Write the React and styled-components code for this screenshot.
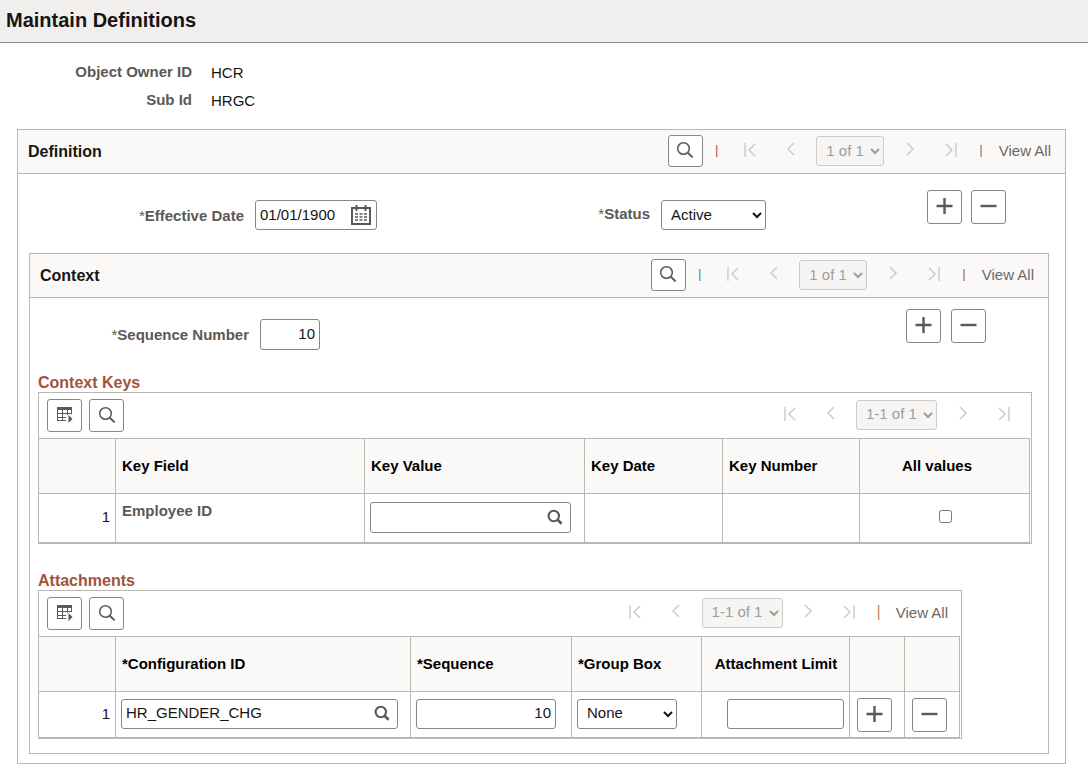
import { useState } from "react";
import styled, { createGlobalStyle } from "styled-components";

const GlobalStyle = createGlobalStyle`
  * {
    box-sizing: border-box;
  }

  body {
    margin: 0;
    background: #fff;
    color: #161513;
    font-family: "Liberation Sans", Arial, Helvetica, sans-serif;
    font-size: 15px;
    line-height: 20px;
  }

  button, input, select {
    margin: 0;
    color: inherit;
    font: inherit;
  }
`;

const PageHeader = styled.header`
  padding: 8px 6px 10px;
  background: #f1efed;
  border-bottom: 1px solid #8b8580;
`;

const PageTitle = styled.h1`
  margin: 0;
  font-size: 20px;
  line-height: 24px;
`;

const Summary = styled.dl`
  display: grid;
  grid-template-columns: 192px 1fr;
  column-gap: 19px;
  row-gap: 8px;
  margin: 0;
  padding: 19px 0;
`;

const SummaryTerm = styled.dt`
  color: #5b5856;
  font-weight: bold;
  text-align: right;
`;

const SummaryValue = styled.dd`
  margin: 0;
  padding-top: 1px;
  line-height: 19px;
`;

const Panel = styled.section`
  margin: ${({ $nested }) => ($nested ? "0 16px 9px 11px" : "0 22px 10px 17px")};
  border: 1px solid #bcb6b1;
`;

const PanelHeader = styled.header`
  display: flex;
  align-items: center;
  justify-content: space-between;
  padding: 5px 14px 6px 10px;
  background: #fbf9f8;
  border-bottom: 1px solid #bcb6b1;
`;

const PanelTitle = styled.h2`
  margin: 0;
  padding-top: 2px;
  font-size: 16px;
`;

const Toolbar = styled.div`
  display: flex;
  align-items: center;
`;

const IconButton = styled.button`
  display: inline-flex;
  flex: none;
  align-items: center;
  justify-content: center;
  width: 35px;
  height: ${({ $height }) => $height || 34}px;
  padding: 0 0 2px;
  background: #fff;
  border: 1px solid #8b8580;
  border-radius: 3px;
  color: #5b5856;
`;

const NavButton = styled.button`
  display: flex;
  justify-content: center;
  width: 41px;
  padding: 0 0 2px;
  background: none;
  border: 0;
  color: #cfcbc7;
`;

const Divider = styled.span`
  margin: 0 ${({ $after }) => $after}px 2px ${({ $before }) => $before}px;
  color: ${({ $color }) => $color};
  font-size: ${({ $size }) => $size || 13}px;
`;

const ViewAll = styled.a`
  color: #6b6866;
  text-decoration: none;
  white-space: nowrap;
`;

const Select = styled.select`
  width: ${({ $width }) => $width}px;
  height: 30px;
  padding: 0 0 2px 5px;
  background: #fff;
  border: 1px solid #8b8580;
  border-radius: 3px;
  color: #161513;

  &:disabled {
    margin: 0 5px;
    background: #f6f5f3;
    border-color: #cfcbc6;
    color: #a09d9a;
    opacity: 1;
  }
`;

const FieldRow = styled.div`
  display: flex;
  align-items: flex-start;
  padding: ${({ $nested }) => ($nested ? "11px 62px 22px 0" : "16px 59px 23px 0")};
`;

const FieldLabel = styled.label`
  width: ${({ $width }) => $width}px;
  margin-right: 11px;
  padding-top: ${({ $top }) => $top || 16}px;
  color: #5b5856;
  font-weight: bold;
  text-align: right;
`;

const Required = styled.span`
  font-weight: normal;
`;

const Control = styled.div`
  padding-top: 10px;
`;

const TextInput = styled.input`
  display: block;
  width: ${({ $width }) => $width}px;
  height: ${({ $height }) => $height || 30}px;
  margin-left: ${({ $end }) => ($end ? "auto" : 0)};
  padding: 0 4px 2px;
  background: #fff;
  border: 1px solid #8b8580;
  border-radius: 3px;
  text-align: ${({ $numeric }) => ($numeric ? "right" : "left")};
`;

const InputGroup = styled.div`
  display: flex;
  align-items: center;
  width: ${({ $width }) => $width}px;
  height: ${({ $height }) => $height || 30}px;
  padding: 0 5px 0 4px;
  background: #fff;
  border: 1px solid #8b8580;
  border-radius: 3px;
`;

const GroupInput = styled.input`
  flex: 1;
  min-width: 0;
  height: 100%;
  padding: 0 0 2px;
  background: none;
  border: 0;
  outline: none;
`;

const GroupButton = styled.button`
  display: flex;
  padding: 0 ${({ $inset }) => $inset || 0}px 1px 0;
  background: none;
  border: 0;
  color: #5b5856;
`;

const Actions = styled.div`
  display: flex;
  gap: ${({ $gap }) => $gap}px;
  margin-left: auto;
`;

const GridTitle = styled.h3`
  margin: 0;
  padding: 1px 0 0 8px;
  color: #a2533a;
  font-size: 16px;
  line-height: 19px;
`;

const Grid = styled.div`
  width: ${({ $fit }) => ($fit ? "fit-content" : "auto")};
  margin: 0 16px ${({ $fit }) => ($fit ? 14 : 26)}px 8px;
  padding-right: 1px;
  border: 1px solid #bcb6b1;
`;

const GridToolbar = styled.div`
  display: flex;
  align-items: center;
  justify-content: space-between;
  padding: 6px ${({ $end }) => $end}px 6px 8px;

  ${Toolbar} {
    padding-bottom: 2px;
  }
`;

const GridTools = styled.div`
  display: flex;
  gap: 7px;
`;

const Table = styled.table`
  width: 100%;
  border-top: 1px solid #bcb6b1;
  border-spacing: 0;
  table-layout: ${({ $fit }) => ($fit ? "auto" : "fixed")};
`;

const Th = styled.th`
  width: ${({ $width }) => $width}px;
  height: 55px;
  padding: 0 ${({ $end }) => $end || 5}px 0 6px;
  background: #fbf9f8;
  border-right: 1px solid #bcb6b1;
  border-bottom: 1px solid #bcb6b1;
  color: #000;
  text-align: ${({ $center }) => ($center ? "center" : "left")};
  white-space: nowrap;
`;

const Td = styled.td`
  height: ${({ $height }) => $height}px;
  padding: 0 5px 2px;
  border-right: 1px solid #bcb6b1;
  border-bottom: 1px solid #bcb6b1;
  text-align: ${({ $align }) => $align || "left"};

  ${IconButton} {
    display: flex;
    margin: 2px 0 0 2px;
  }
`;

const KeyField = styled.div`
  padding: 0 1px 12px;
  color: #5b5856;
  font-weight: bold;
`;

const CheckboxCell = styled.div`
  display: flex;
  justify-content: center;
  padding: 0 0 2px 2px;
`;

const Checkbox = styled.input`
  width: 13px;
  height: 13px;
`;

function SearchIcon() {
  return (
    <svg width="18" height="18" viewBox="0 0 18 18" fill="none" stroke="currentColor">
      <circle cx="7.5" cy="7.5" r="5.8" strokeWidth="1.5" />
      <path d="M11.8 11.8L16.6 16.4" strokeWidth="2" />
    </svg>
  );
}

function LookupIcon() {
  return (
    <svg width="16" height="16" viewBox="0 0 16 16" fill="none" stroke="currentColor">
      <circle cx="6.8" cy="7" r="5.2" strokeWidth="2.1" />
      <path d="M10.3 10.5L14.6 14.7" strokeWidth="2.6" />
    </svg>
  );
}

function CalendarIcon() {
  return (
    <svg width="20" height="20" viewBox="0 0 20 20" fill="none" stroke="currentColor">
      <path d="M1 3H19V19H1Z" strokeWidth="2" />
      <path d="M5.5 0V6M14.5 0V6" strokeWidth="2" />
      <path d="M4 9H16M4 12H16M4 15H16" strokeWidth="1.5" strokeDasharray="3 1.5" />
    </svg>
  );
}

function GridIcon() {
  return (
    <svg width="18" height="18" viewBox="0 0 18 18" fill="none" stroke="currentColor">
      <path d="M1 1H16V4H1Z" fill="currentColor" stroke="none" />
      <path d="M1.5 3V15M6.5 3V15M11.5 3V9M15.5 3V8M1 7.5H16M1 11.5H10M1 14.5H10" />
      <path d="M12.5 9L16.5 13L12.5 17Z" fill="currentColor" stroke="none" />
    </svg>
  );
}

function PlusIcon() {
  return (
    <svg width="17" height="16" viewBox="0 0 17 16" fill="none" stroke="currentColor" strokeWidth="2.4">
      <path d="M0.5 8H16.5M8.5 0V16" />
    </svg>
  );
}

function MinusIcon() {
  return (
    <svg width="17" height="16" viewBox="0 0 17 16" fill="none" stroke="currentColor" strokeWidth="2.4">
      <path d="M0.5 8H16.5" />
    </svg>
  );
}

const navPaths = {
  first: "M2 1V15M12 2L6 8L12 14",
  prev: "M10 1L4 7L10 13",
  next: "M4 1L10 7L4 13",
  last: "M2 2L8 8L2 14M12 1V15",
};

function NavIcon({ type }) {
  return (
    <svg width="14" height="16" viewBox="0 0 14 16" fill="none" stroke="currentColor" strokeWidth="1.5">
      <path d={navPaths[type]} />
    </svg>
  );
}

function Pager({ range, width, name }) {
  return (
    <>
      <NavButton type="button" disabled aria-label={`First ${name}`}>
        <NavIcon type="first" />
      </NavButton>
      <NavButton type="button" disabled aria-label={`Previous ${name}`}>
        <NavIcon type="prev" />
      </NavButton>
      <Select $width={width} disabled aria-label={`${name} range`}>
        <option>{range}</option>
      </Select>
      <NavButton type="button" disabled aria-label={`Next ${name}`}>
        <NavIcon type="next" />
      </NavButton>
      <NavButton type="button" disabled aria-label={`Last ${name}`}>
        <NavIcon type="last" />
      </NavButton>
    </>
  );
}

function PanelBar({ title, colors }) {
  return (
    <PanelHeader>
      <PanelTitle>{title}</PanelTitle>
      <Toolbar>
        <IconButton type="button" $height={32} aria-label={`Find ${title}`}>
          <SearchIcon />
        </IconButton>
        <Divider $before={12} $after={11} $color={colors[0]}>|</Divider>
        <Pager range="1 of 1" width={68} name={title} />
        <Divider $before={8} $after={16} $color={colors[1]}>|</Divider>
        <ViewAll href="#">View All</ViewAll>
      </Toolbar>
    </PanelHeader>
  );
}

function GridButtons({ name }) {
  return (
    <GridTools>
      <IconButton type="button" $height={33} aria-label={`${name} grid actions`}>
        <GridIcon />
      </IconButton>
      <IconButton type="button" $height={33} aria-label={`Find ${name}`}>
        <SearchIcon />
      </IconButton>
    </GridTools>
  );
}

function ContextKeys() {
  const [value, setValue] = useState("");

  return (
    <>
      <GridTitle>Context Keys</GridTitle>
      <Grid>
        <GridToolbar $end={6}>
          <GridButtons name="Context Keys" />
          <Toolbar>
            <Pager range="1-1 of 1" width={81} name="Context Keys" />
          </Toolbar>
        </GridToolbar>
        <Table>
          <thead>
            <tr>
              <Th $width={77} />
              <Th $width={249}>Key Field</Th>
              <Th $width={220}>Key Value</Th>
              <Th $width={138}>Key Date</Th>
              <Th $width={137}>Key Number</Th>
              <Th $width={170} $center $end={21}>All values</Th>
            </tr>
          </thead>
          <tbody>
            <tr>
              <Td $height={49} $align="right">1</Td>
              <Td><KeyField>Employee ID</KeyField></Td>
              <Td>
                <InputGroup $width={201} $height={31}>
                  <GroupInput
                    aria-label="Key Value"
                    value={value}
                    onChange={(e) => setValue(e.target.value)}
                  />
                  <GroupButton type="button" $inset={2} aria-label="Look up Key Value">
                    <LookupIcon />
                  </GroupButton>
                </InputGroup>
              </Td>
              <Td />
              <Td />
              <Td>
                <CheckboxCell>
                  <Checkbox type="checkbox" aria-label="All values" />
                </CheckboxCell>
              </Td>
            </tr>
          </tbody>
        </Table>
      </Grid>
    </>
  );
}

function Attachments() {
  return (
    <>
      <GridTitle>Attachments</GridTitle>
      <Grid $fit>
        <GridToolbar $end={12}>
          <GridButtons name="Attachments" />
          <Toolbar>
            <Pager range="1-1 of 1" width={81} name="Attachments" />
            <Divider $before={7} $after={15} $color="#c08a50" $size={16}>|</Divider>
            <ViewAll href="#">View All</ViewAll>
          </Toolbar>
        </GridToolbar>
        <Table $fit>
          <thead>
            <tr>
              <Th $width={77} />
              <Th $width={295}>*Configuration ID</Th>
              <Th $width={161}>*Sequence</Th>
              <Th $width={130}>*Group Box</Th>
              <Th $width={148} $center>Attachment Limit</Th>
              <Th $width={55} />
              <Th $width={55} />
            </tr>
          </thead>
          <tbody>
            <tr>
              <Td $height={46} $align="right">1</Td>
              <Td>
                <InputGroup $width={277}>
                  <GroupInput aria-label="Configuration ID" defaultValue="HR_GENDER_CHG" />
                  <GroupButton type="button" $inset={2} aria-label="Look up Configuration ID">
                    <LookupIcon />
                  </GroupButton>
                </InputGroup>
              </Td>
              <Td>
                <TextInput $width={140} $numeric aria-label="Sequence" defaultValue="10" />
              </Td>
              <Td>
                <Select $width={100} aria-label="Group Box">
                  <option>None</option>
                </Select>
              </Td>
              <Td>
                <TextInput $width={117} $end $numeric aria-label="Attachment Limit" />
              </Td>
              <Td>
                <IconButton type="button" aria-label="Add attachment row">
                  <PlusIcon />
                </IconButton>
              </Td>
              <Td>
                <IconButton type="button" aria-label="Delete attachment row">
                  <MinusIcon />
                </IconButton>
              </Td>
            </tr>
          </tbody>
        </Table>
      </Grid>
    </>
  );
}

function App() {
  return (
    <>
      <GlobalStyle />
      <PageHeader>
        <PageTitle>Maintain Definitions</PageTitle>
      </PageHeader>

      <main>
        <Summary>
          <SummaryTerm>Object Owner ID</SummaryTerm>
          <SummaryValue>HCR</SummaryValue>
          <SummaryTerm>Sub Id</SummaryTerm>
          <SummaryValue>HRGC</SummaryValue>
        </Summary>

        <Panel>
          <PanelBar title="Definition" colors={["#a8584e", "#4f8488"]} />
          <FieldRow>
            <FieldLabel $width={226} htmlFor="effective-date">
              <Required>*</Required>Effective Date
            </FieldLabel>
            <Control>
              <InputGroup $width={122}>
                <GroupInput id="effective-date" defaultValue="01/01/1900" />
                <GroupButton type="button" aria-label="Choose a date">
                  <CalendarIcon />
                </GroupButton>
              </InputGroup>
            </Control>
            <FieldLabel $width={273} $top={14} htmlFor="status">
              <Required>*</Required>Status
            </FieldLabel>
            <Control>
              <Select $width={105} id="status">
                <option>Active</option>
                <option>Inactive</option>
              </Select>
            </Control>
            <Actions $gap={9}>
              <IconButton type="button" aria-label="Add definition">
                <PlusIcon />
              </IconButton>
              <IconButton type="button" aria-label="Delete definition">
                <MinusIcon />
              </IconButton>
            </Actions>
          </FieldRow>

          <Panel $nested>
            <PanelBar title="Context" colors={["#4f8488", "#a8584e"]} />
            <FieldRow $nested>
              <FieldLabel $width={219} htmlFor="sequence-number">
                <Required>*</Required>Sequence Number
              </FieldLabel>
              <Control>
                <TextInput $width={60} $height={31} $numeric id="sequence-number" defaultValue="10" />
              </Control>
              <Actions $gap={10}>
                <IconButton type="button" aria-label="Add context">
                  <PlusIcon />
                </IconButton>
                <IconButton type="button" aria-label="Delete context">
                  <MinusIcon />
                </IconButton>
              </Actions>
            </FieldRow>
            <ContextKeys />
            <Attachments />
          </Panel>
        </Panel>
      </main>
    </>
  );
}

export default App;
